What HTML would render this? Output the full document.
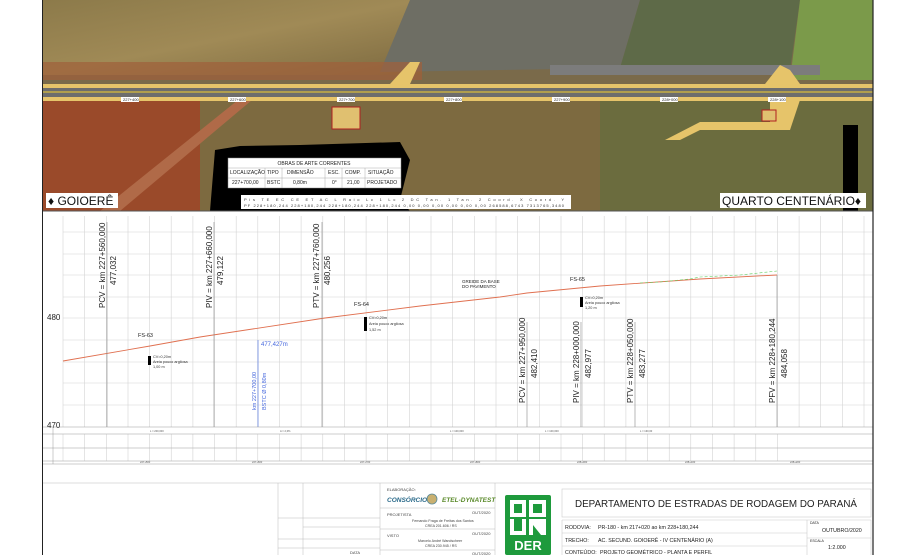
<!DOCTYPE html>
<html><head><meta charset="utf-8"><style>
html,body{margin:0;padding:0;background:#fff;}
body{width:915px;height:555px;overflow:hidden;position:relative;font-family:"Liberation Sans",sans-serif;}
svg text{font-family:"Liberation Sans",sans-serif;}
</style></head><body>
<svg width="915" height="555" viewBox="0 0 915 555" xmlns="http://www.w3.org/2000/svg">
<defs>
<linearGradient id="fld" x1="0" y1="0" x2="1" y2="1">
<stop offset="0" stop-color="#8c7a4a"/><stop offset="0.5" stop-color="#a08a56"/><stop offset="1" stop-color="#7d6a40"/>
</linearGradient>
</defs>
<!-- aerial photo -->
<rect x="42" y="0" width="831" height="211" fill="#7a6a4a"/>
<rect x="42" y="0" width="380" height="75" fill="url(#fld)"/>
<polygon points="410,0 640,0 620,68 380,72" fill="#6e6e64"/>
<polygon points="640,0 800,0 790,70 620,68" fill="#5e6a48"/>
<polygon points="800,0 873,0 873,80 790,80" fill="#7b9a4a"/>
<rect x="42" y="62" width="380" height="18" fill="#a0603a" opacity="0.7"/>
<rect x="42" y="100" width="200" height="111" fill="#9a4a2a"/>
<rect x="200" y="100" width="470" height="111" fill="#7d6a40"/>
<rect x="600" y="100" width="273" height="111" fill="#6b6c3e"/>
<polygon points="238,100 100,211 120,211 252,100" fill="#b06a48"/>
<rect x="550" y="65" width="270" height="10" fill="#7c7c7c"/>
<!-- road -->
<rect x="42" y="84" width="831" height="17" fill="#e6c46a"/>
<rect x="42" y="88" width="831" height="9" fill="#6d6d6d"/>
<line x1="42" y1="92" x2="873" y2="92" stroke="#f2d030" stroke-width="1"/>
<polygon points="390,84 410,62 420,62 410,84" fill="#e6c46a"/>
<polygon points="770,100 800,100 790,130 700,130 680,140 665,140 700,122 770,122" fill="#e6c46a"/>
<polygon points="765,84 780,65 790,70 800,84" fill="#e6c46a"/>
<rect x="332" y="107" width="28" height="22" fill="#e0c070" stroke="#b02020" stroke-width="1"/>
<rect x="762" y="110" width="14" height="11" fill="#e0c070" stroke="#b02020" stroke-width="1"/>
<rect x="843" y="125" width="15" height="86" fill="#000"/>
<g font-size="4" fill="#222">
<rect x="121" y="97" width="18" height="5" fill="#fff"/><text x="123" y="101">227+400</text>
<rect x="228" y="97" width="18" height="5" fill="#fff"/><text x="230" y="101">227+600</text>
<rect x="337" y="97" width="18" height="5" fill="#fff"/><text x="339" y="101">227+700</text>
<rect x="444" y="97" width="18" height="5" fill="#fff"/><text x="446" y="101">227+800</text>
<rect x="552" y="97" width="18" height="5" fill="#fff"/><text x="554" y="101">227+900</text>
<rect x="660" y="97" width="18" height="5" fill="#fff"/><text x="662" y="101">228+000</text>
<rect x="768" y="97" width="18" height="5" fill="#fff"/><text x="770" y="101">228+100</text>
</g>
<path d="M215,150 L240,146 L300,145 L400,142 L410,160 L400,200 L410,211 L210,211 Z" fill="#000"/>
<rect x="228" y="158" width="173" height="30" fill="#fff" stroke="#888" stroke-width="0.5"/>
<g font-size="5" fill="#222">
<text x="314" y="165" text-anchor="middle">OBRAS DE ARTE CORRENTES</text>
<text x="230" y="174">LOCALIZAÇÃO</text><text x="267" y="174">TIPO</text><text x="287" y="174">DIMENSÃO</text><text x="328" y="174">ESC.</text><text x="345" y="174">COMP.</text><text x="368" y="174">SITUAÇÃO</text>
<text x="232" y="184">227+700,00</text><text x="267" y="184">BSTC</text><text x="293" y="184">0,80m</text><text x="332" y="184">0°</text><text x="347" y="184">21,00</text><text x="367" y="184">PROJETADO</text>
</g>
<g stroke="#999" stroke-width="0.4"><line x1="228" y1="168" x2="401" y2="168"/><line x1="228" y1="178" x2="401" y2="178"/>
<line x1="265" y1="168" x2="265" y2="188"/><line x1="282" y1="168" x2="282" y2="188"/><line x1="325" y1="168" x2="325" y2="188"/><line x1="342" y1="168" x2="342" y2="188"/><line x1="365" y1="168" x2="365" y2="188"/></g>
<rect x="241" y="195" width="330" height="14" fill="#fff"/>
<g font-size="4" fill="#333"><text x="244" y="201" textLength="320">Pis     TE       EC       CE       ET        AC   L   Raio  Lc 1  Lc 2  DC  Tan. 1  Tan. 2   Coord. X   Coord. Y</text>
<text x="244" y="207" textLength="320">PF 228+180,244 228+180,244 228+180,244 228+180,244    0,00 0,00 0,00 0,00 0,00 0,00 268588,6743 7313765,3480</text></g>
<rect x="46" y="193" width="72" height="15" fill="#fff"/>
<text x="48" y="205" font-size="12" fill="#111">♦ GOIOERÊ</text>
<rect x="720" y="193" width="146" height="15" fill="#fff"/>
<text x="722" y="205" font-size="12" fill="#111">QUARTO CENTENÁRIO♦</text>
<!-- profile -->
<rect x="42" y="211" width="831" height="344" fill="#fff"/>
<line x1="42" y1="211" x2="873" y2="211" stroke="#555" stroke-width="1"/>
<g stroke="#d4d4d4" stroke-width="0.6">
<line x1="63" y1="232" x2="873" y2="232"/><line x1="63" y1="254" x2="873" y2="254"/><line x1="63" y1="275" x2="873" y2="275"/><line x1="63" y1="297" x2="873" y2="297"/><line x1="63" y1="318" x2="873" y2="318"/><line x1="63" y1="340" x2="873" y2="340"/><line x1="63" y1="362" x2="873" y2="362"/><line x1="63" y1="383" x2="873" y2="383"/><line x1="63" y1="405" x2="873" y2="405"/>
<line x1="63" y1="216" x2="63" y2="427"/><line x1="84.6" y1="216" x2="84.6" y2="427"/><line x1="106.3" y1="216" x2="106.3" y2="427"/><line x1="128" y1="216" x2="128" y2="427"/><line x1="149.6" y1="216" x2="149.6" y2="427"/><line x1="171.2" y1="216" x2="171.2" y2="427"/><line x1="192.9" y1="216" x2="192.9" y2="427"/><line x1="214.5" y1="216" x2="214.5" y2="427"/><line x1="236.2" y1="216" x2="236.2" y2="427"/><line x1="257.8" y1="216" x2="257.8" y2="427"/><line x1="279.5" y1="216" x2="279.5" y2="427"/><line x1="301.1" y1="216" x2="301.1" y2="427"/><line x1="322.8" y1="216" x2="322.8" y2="427"/><line x1="344.4" y1="216" x2="344.4" y2="427"/><line x1="366.1" y1="216" x2="366.1" y2="427"/><line x1="387.7" y1="216" x2="387.7" y2="427"/><line x1="409.4" y1="216" x2="409.4" y2="427"/><line x1="431" y1="216" x2="431" y2="427"/><line x1="452.7" y1="216" x2="452.7" y2="427"/><line x1="474.3" y1="216" x2="474.3" y2="427"/><line x1="496" y1="216" x2="496" y2="427"/><line x1="517.6" y1="216" x2="517.6" y2="427"/><line x1="539.3" y1="216" x2="539.3" y2="427"/><line x1="561" y1="216" x2="561" y2="427"/><line x1="582.6" y1="216" x2="582.6" y2="427"/><line x1="604.2" y1="216" x2="604.2" y2="427"/><line x1="625.9" y1="216" x2="625.9" y2="427"/><line x1="647.5" y1="216" x2="647.5" y2="427"/><line x1="669.2" y1="216" x2="669.2" y2="427"/><line x1="690.8" y1="216" x2="690.8" y2="427"/><line x1="712.5" y1="216" x2="712.5" y2="427"/><line x1="734.1" y1="216" x2="734.1" y2="427"/><line x1="755.8" y1="216" x2="755.8" y2="427"/><line x1="777.4" y1="216" x2="777.4" y2="427"/><line x1="799.1" y1="216" x2="799.1" y2="427"/><line x1="820.7" y1="216" x2="820.7" y2="427"/><line x1="842.4" y1="216" x2="842.4" y2="427"/><line x1="864" y1="216" x2="864" y2="427"/>
</g>
<text x="47" y="320" font-size="8" fill="#222">480</text>
<text x="47" y="428" font-size="8" fill="#222">470</text>
<polyline points="63,361 150,346 200,337 325,318 420,306 500,297 527,293 600,286 700,279 777,275" fill="none" stroke="#e07050" stroke-width="0.9"/>
<polyline points="640,283 660,282 690,279 700,277 740,275 777,271" fill="none" stroke="#60d060" stroke-width="0.6" stroke-dasharray="3,2"/>
<g stroke="#888" stroke-width="0.6">
<line x1="107" y1="222" x2="107" y2="427"/><line x1="214" y1="222" x2="214" y2="427"/><line x1="322" y1="222" x2="322" y2="427"/>
<line x1="527" y1="322" x2="527" y2="427"/><line x1="581" y1="322" x2="581" y2="427"/><line x1="635" y1="322" x2="635" y2="427"/><line x1="777" y1="275" x2="777" y2="427"/>
</g>
<line x1="258" y1="340" x2="258" y2="427" stroke="#5577dd" stroke-width="0.7"/>
<text x="261" y="346" font-size="6" fill="#4466dd">477,427m</text>
<text transform="translate(256,410) rotate(-90)" font-size="5.5" fill="#4466dd">km 227+700,00</text>
<text transform="translate(266,410) rotate(-90)" font-size="5.5" fill="#4466dd">BSTC Ø 0,80m</text>
<g font-size="8" fill="#222">
<text transform="translate(105,308) rotate(-90)">PCV = km 227+560,000</text><text transform="translate(116,285) rotate(-90)">477,032</text>
<text transform="translate(212,308) rotate(-90)">PIV = km 227+660,000</text><text transform="translate(223,285) rotate(-90)">479,122</text>
<text transform="translate(319,308) rotate(-90)">PTV = km 227+760,000</text><text transform="translate(330,285) rotate(-90)">480,256</text>
<text transform="translate(525,403) rotate(-90)">PCV = km 227+950,000</text><text transform="translate(537,378) rotate(-90)">482,410</text>
<text transform="translate(579,403) rotate(-90)">PIV = km 228+000,000</text><text transform="translate(591,378) rotate(-90)">482,977</text>
<text transform="translate(633,403) rotate(-90)">PTV = km 228+050,000</text><text transform="translate(645,378) rotate(-90)">483,277</text>
<text transform="translate(775,403) rotate(-90)">PFV = km 228+180,244</text><text transform="translate(787,378) rotate(-90)">484,058</text>
</g>
<g font-size="5.5" fill="#222"><text x="138" y="337">FS-63</text><text x="354" y="306">FS-64</text><text x="570" y="281">FS-65</text>
<text x="462" y="283" font-size="4.5">GREIDE DA BASE</text><text x="462" y="288" font-size="4.5">DO PAVIMENTO</text></g>
<rect x="148" y="356" width="3" height="9" fill="#000"/><rect x="364" y="317" width="3" height="14" fill="#000"/><rect x="580" y="297" width="3" height="10" fill="#000"/>
<g font-size="3.8" fill="#333"><text x="153" y="358">CV=0,20m</text><text x="153" y="363">Areia pouco argilosa</text><text x="153" y="368">1,00 m</text>
<text x="369" y="319">CV=0,20m</text><text x="369" y="325">Areia pouco argilosa</text><text x="369" y="331">1,52 m</text>
<text x="585" y="299">CV=0,20m</text><text x="585" y="304">Areia pouco argilosa</text><text x="585" y="309">1,20 m</text></g>
<!-- bottom bands -->
<g stroke="#999" stroke-width="0.5" fill="none">
<line x1="42" y1="427" x2="873" y2="427"/><line x1="42" y1="434" x2="873" y2="434"/><line x1="42" y1="448" x2="873" y2="448"/><line x1="42" y1="461" x2="873" y2="461"/><line x1="42" y1="464" x2="873" y2="464"/>
<line x1="53" y1="427" x2="53" y2="464"/>
</g>
<g stroke="#bbb" stroke-width="0.4">
<line x1="63" y1="434" x2="63" y2="461"/><line x1="84.6" y1="434" x2="84.6" y2="461"/><line x1="106.3" y1="434" x2="106.3" y2="461"/><line x1="128" y1="434" x2="128" y2="461"/><line x1="149.6" y1="434" x2="149.6" y2="461"/><line x1="171.2" y1="434" x2="171.2" y2="461"/><line x1="192.9" y1="434" x2="192.9" y2="461"/><line x1="214.5" y1="434" x2="214.5" y2="461"/><line x1="236.2" y1="434" x2="236.2" y2="461"/><line x1="257.8" y1="434" x2="257.8" y2="461"/><line x1="279.5" y1="434" x2="279.5" y2="461"/><line x1="301.1" y1="434" x2="301.1" y2="461"/><line x1="322.8" y1="434" x2="322.8" y2="461"/><line x1="344.4" y1="434" x2="344.4" y2="461"/><line x1="366.1" y1="434" x2="366.1" y2="461"/><line x1="387.7" y1="434" x2="387.7" y2="461"/><line x1="409.4" y1="434" x2="409.4" y2="461"/><line x1="431" y1="434" x2="431" y2="461"/><line x1="452.7" y1="434" x2="452.7" y2="461"/><line x1="474.3" y1="434" x2="474.3" y2="461"/><line x1="496" y1="434" x2="496" y2="461"/><line x1="517.6" y1="434" x2="517.6" y2="461"/><line x1="539.3" y1="434" x2="539.3" y2="461"/><line x1="561" y1="434" x2="561" y2="461"/><line x1="582.6" y1="434" x2="582.6" y2="461"/><line x1="604.2" y1="434" x2="604.2" y2="461"/><line x1="625.9" y1="434" x2="625.9" y2="461"/><line x1="647.5" y1="434" x2="647.5" y2="461"/><line x1="669.2" y1="434" x2="669.2" y2="461"/><line x1="690.8" y1="434" x2="690.8" y2="461"/><line x1="712.5" y1="434" x2="712.5" y2="461"/><line x1="734.1" y1="434" x2="734.1" y2="461"/><line x1="755.8" y1="434" x2="755.8" y2="461"/><line x1="777.4" y1="434" x2="777.4" y2="461"/>
</g>
<g font-size="2.6" fill="#555"><text x="150" y="432">L = 200,000</text><text x="280" y="432">A = 2,0%</text><text x="450" y="432">L = 100,000</text><text x="545" y="432">L = 100,000</text><text x="640" y="432">L = 130,00</text>
<text x="140" y="463">227+500</text><text x="252" y="463">227+600</text><text x="360" y="463">227+700</text><text x="470" y="463">227+800</text><text x="577" y="463">228+000</text><text x="685" y="463">228+100</text><text x="790" y="463">228+200</text></g>
<!-- title block -->
<line x1="42" y1="483" x2="873" y2="483" stroke="#bbb" stroke-width="0.6"/>
<g stroke="#bbb" stroke-width="0.5">
<line x1="278" y1="483" x2="278" y2="555"/><line x1="303" y1="483" x2="303" y2="555"/><line x1="380" y1="483" x2="380" y2="555"/><line x1="495" y1="483" x2="495" y2="555"/>
<line x1="278" y1="518" x2="380" y2="518"/><line x1="303" y1="527" x2="380" y2="527"/><line x1="278" y1="539" x2="380" y2="539"/><line x1="278" y1="548" x2="380" y2="548"/>
<line x1="380" y1="508" x2="495" y2="508"/><line x1="380" y1="529" x2="495" y2="529"/><line x1="380" y1="550" x2="495" y2="550"/>
</g>
<g font-size="4" fill="#444"><text x="387" y="491">ELABORAÇÃO:</text><text x="387" y="516">PROJETISTA</text><text x="472" y="514">OUT/2020</text>
<text x="412" y="522" font-size="3.6">Fernando Fraga de Freitas dos Santos</text><text x="425" y="527" font-size="3.6">CREA 201.606 / RS</text>
<text x="387" y="537">VISTO</text><text x="472" y="535">OUT/2020</text><text x="418" y="542" font-size="3.6">Marcelo André Wandscheer</text><text x="425" y="547" font-size="3.6">CREA 230.945 / RS</text>
<text x="472" y="555">OUT/2020</text><text x="350" y="554">DATA</text></g>
<text x="387" y="502" font-size="6.5" font-weight="bold" font-style="italic" fill="#2a6a8a">CONSÓRCIO</text>
<circle cx="432" cy="499" r="5" fill="#c9b070" stroke="#5a8a9a" stroke-width="0.8"/>
<text x="442" y="502" font-size="6.5" font-weight="bold" font-style="italic" fill="#5a8a2a">ETEL-DYNATEST</text>
<!-- DER logo -->
<rect x="505" y="495" width="46" height="60" rx="2" fill="#1e9a3c"/>
<rect x="510" y="500" width="16" height="17" fill="#fff"/><rect x="514" y="504" width="8" height="9" fill="#1e9a3c"/>
<rect x="529" y="500" width="17" height="17" fill="#fff"/><rect x="533" y="504" width="9" height="9" fill="#1e9a3c"/>
<rect x="510" y="519" width="16" height="16" fill="#fff"/><rect x="514" y="519" width="8" height="12" fill="#1e9a3c"/>
<polygon points="529,519 546,519 546,535 541,535 533,525 533,535 529,535" fill="#fff"/>
<text x="528" y="550" font-size="13" font-weight="bold" fill="#fff" text-anchor="middle">DER</text>
<!-- main title -->
<rect x="562" y="489" width="309" height="28" fill="#fff" stroke="#ccc" stroke-width="0.6"/>
<text x="716" y="507" font-size="10" fill="#222" text-anchor="middle" textLength="282" lengthAdjust="spacingAndGlyphs">DEPARTAMENTO DE ESTRADAS DE RODAGEM DO PARANÁ</text>
<g stroke="#ccc" stroke-width="0.6"><line x1="562" y1="520" x2="871" y2="520"/><line x1="562" y1="533" x2="807" y2="533"/><line x1="562" y1="546" x2="807" y2="546"/><line x1="807" y1="520" x2="807" y2="555"/><line x1="807" y1="538" x2="871" y2="538"/><line x1="562" y1="520" x2="562" y2="555"/><line x1="871" y1="520" x2="871" y2="555"/></g>
<g font-size="5.3" fill="#222"><text x="565" y="529">RODOVIA:</text><text x="598" y="529">PR-180 - km 217+020 ao km 228+180,244</text>
<text x="565" y="542">TRECHO:</text><text x="598" y="542">AC. SECUND. GOIOERÊ -  IV CENTENÁRIO (A)</text>
<text x="565" y="554">CONTEÚDO:</text><text x="600" y="554">PROJETO GEOMÉTRICO - PLANTA E PERFIL</text>
<text x="810" y="524" font-size="3.5">DATA</text><text x="822" y="532">OUTUBRO/2020</text>
<text x="810" y="542" font-size="3.5">ESCALA</text><text x="828" y="549">1:2.000</text></g>
<line x1="42.5" y1="0" x2="42.5" y2="555" stroke="#222" stroke-width="1"/>
<line x1="873" y1="0" x2="873" y2="555" stroke="#222" stroke-width="1.2"/>
</svg>
</body></html>
